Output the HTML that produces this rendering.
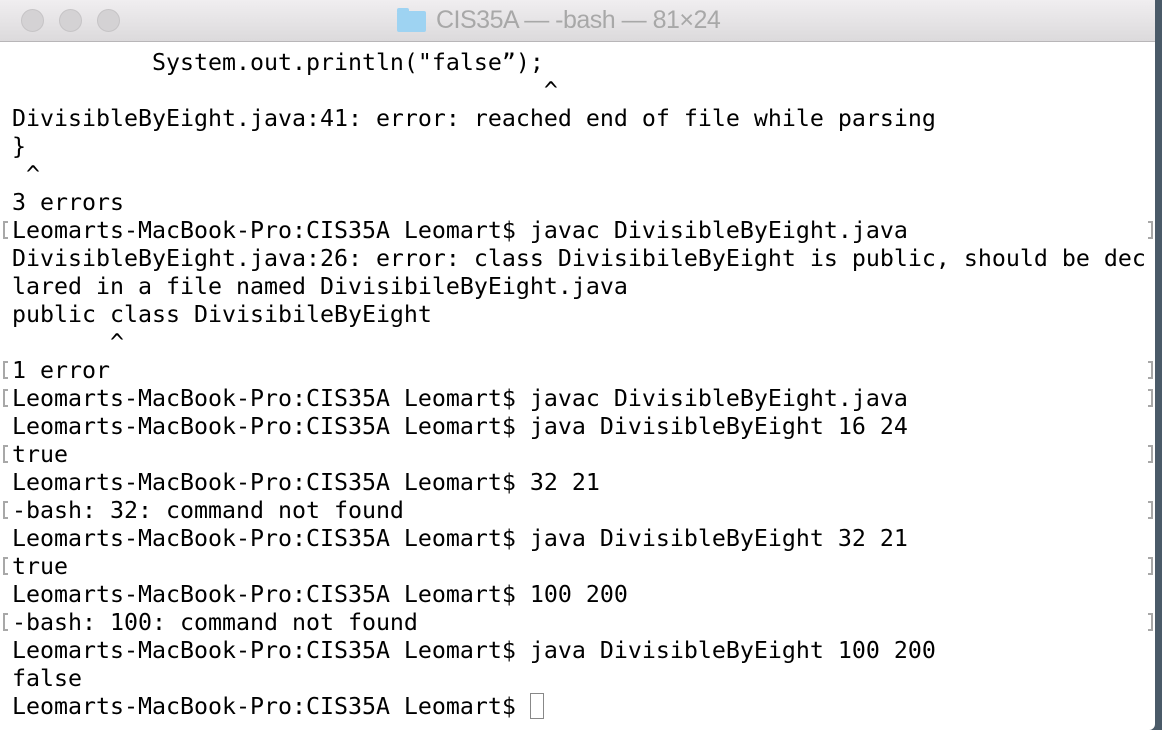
<!DOCTYPE html>
<html><head><meta charset="utf-8"><style>
html,body{margin:0;padding:0;width:1162px;height:730px;overflow:hidden;background:#4a5a68;}
.win{position:absolute;left:0;top:0;width:1155px;height:730px;background:#fff;border-radius:0 0 6px 0;overflow:hidden;}
.tb{position:absolute;left:0;top:0;width:1155px;height:41px;background:linear-gradient(#f0eef0,#dcdadc);border-bottom:1px solid #b8b6b8;}
.dot{position:absolute;top:9px;width:23px;height:23px;border-radius:50%;background:#d4d2d4;border:1px solid #c6c4c6;box-sizing:border-box;}
.title{position:absolute;top:6px;left:436px;font:25px "Liberation Sans",sans-serif;color:#a8a8a8;letter-spacing:-0.5px;}
.folder{position:absolute;left:397px;top:11px;width:29px;height:21px;background:#9ed3f2;border-radius:2px;}
.folder:before{content:"";position:absolute;left:0;top:-3px;width:12px;height:4px;background:#9ed3f2;border-radius:2px 2px 0 0;}
.term{position:absolute;left:12px;top:49px;font:23.25px/28px "DejaVu Sans Mono","Liberation Mono",monospace;color:#000;white-space:pre;}
.br{position:absolute;width:5px;height:18px;border:2px solid #a8a8a8;box-sizing:border-box;}
.l{left:3px;border-right:none;}
.r{left:1148px;border-left:none;}
.cur{position:absolute;left:530px;top:693px;width:14px;height:26px;border:1px solid #888;box-sizing:border-box;}
</style></head><body>
<div class="win">
<div class="tb">
<div class="dot" style="left:21px"></div><div class="dot" style="left:59px"></div><div class="dot" style="left:97px"></div>
<div class="folder"></div><div class="title">CIS35A — -bash — 81×24</div>
</div>
<div class="term">          System.out.println("false”);
                                      ^
DivisibleByEight.java:41: error: reached end of file while parsing
}
 ^
3 errors
Leomarts-MacBook-Pro:CIS35A Leomart$ javac DivisibleByEight.java
DivisibleByEight.java:26: error: class DivisibileByEight is public, should be dec
lared in a file named DivisibileByEight.java
public class DivisibileByEight
       ^
1 error
Leomarts-MacBook-Pro:CIS35A Leomart$ javac DivisibleByEight.java
Leomarts-MacBook-Pro:CIS35A Leomart$ java DivisibleByEight 16 24
true
Leomarts-MacBook-Pro:CIS35A Leomart$ 32 21
-bash: 32: command not found
Leomarts-MacBook-Pro:CIS35A Leomart$ java DivisibleByEight 32 21
true
Leomarts-MacBook-Pro:CIS35A Leomart$ 100 200
-bash: 100: command not found
Leomarts-MacBook-Pro:CIS35A Leomart$ java DivisibleByEight 100 200
false
Leomarts-MacBook-Pro:CIS35A Leomart$ </div>
<div class="cur"></div>
<div class="br l" style="top:221px"></div><div class="br r" style="top:221px"></div>
<div class="br l" style="top:361px"></div><div class="br r" style="top:361px"></div>
<div class="br l" style="top:389px"></div><div class="br r" style="top:389px"></div>
<div class="br l" style="top:445px"></div><div class="br r" style="top:445px"></div>
<div class="br l" style="top:501px"></div><div class="br r" style="top:501px"></div>
<div class="br l" style="top:557px"></div><div class="br r" style="top:557px"></div>
<div class="br l" style="top:613px"></div><div class="br r" style="top:613px"></div>
</div>
</body></html>
